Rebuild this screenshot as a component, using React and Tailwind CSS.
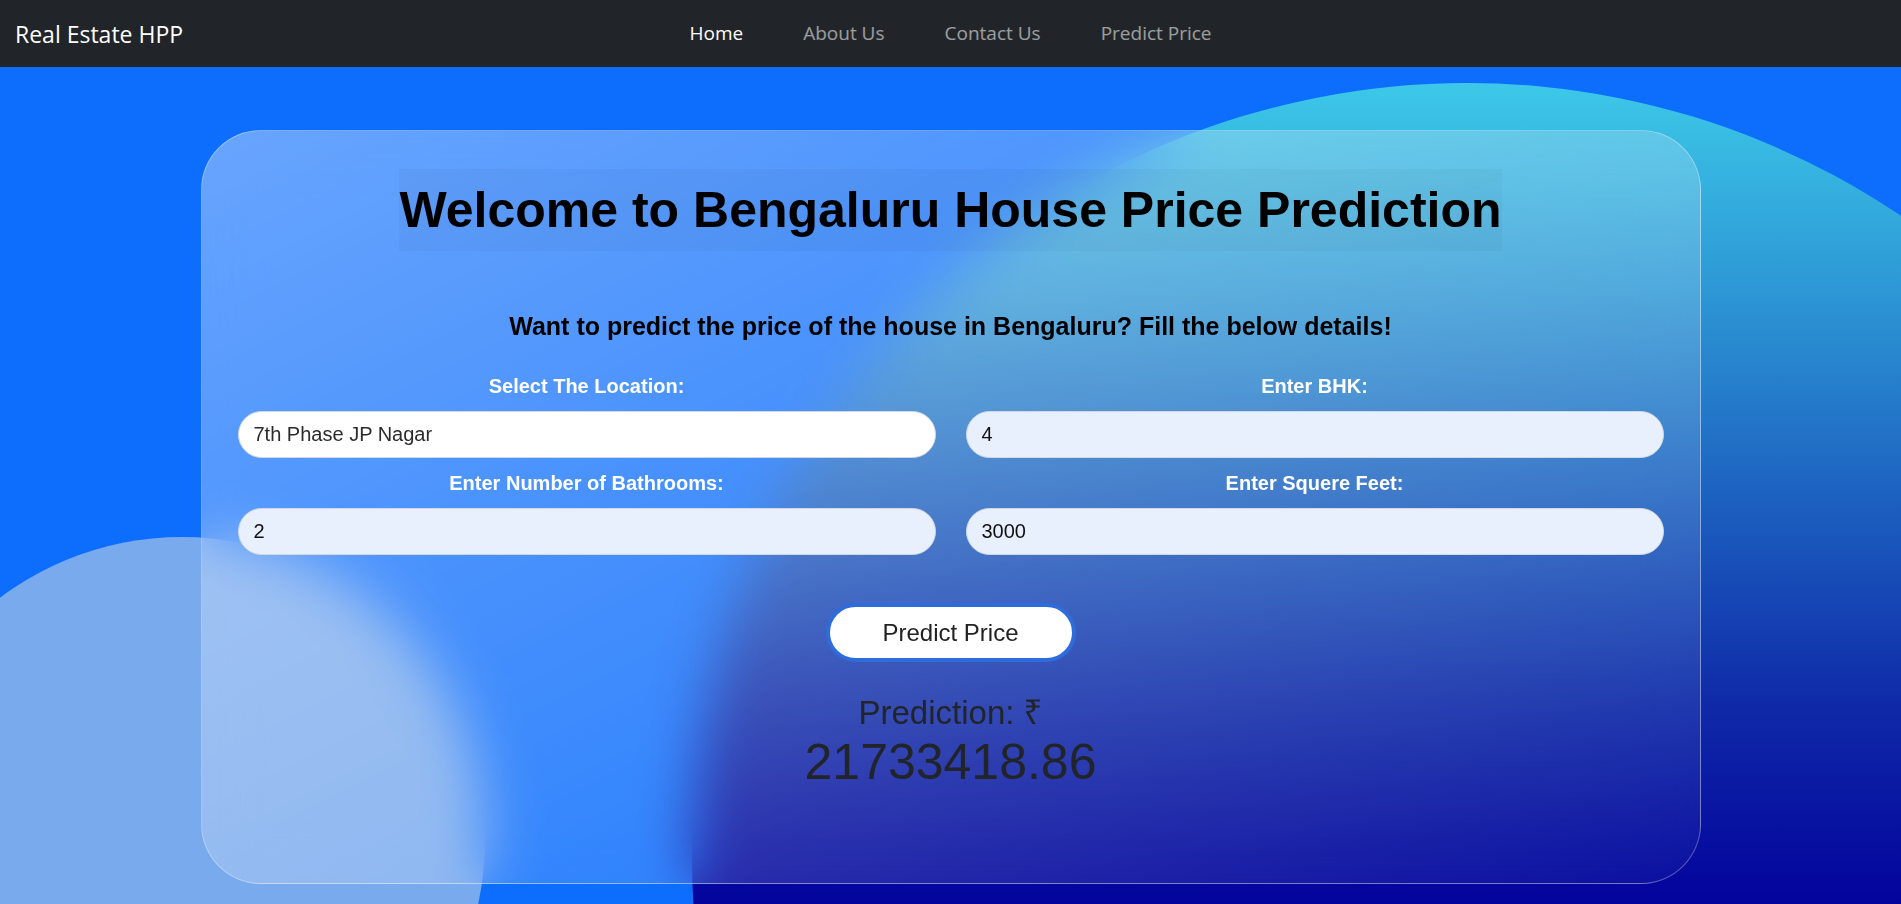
import React, { useState } from "react";

const navLinks = ["Home", "About Us", "Contact Us", "Predict Price"];

function Field({ label, value, white }) {
  return (
    <div className="flex flex-col items-center">
      <label className="mb-[13px] text-[20px] font-bold leading-[24px] text-white">
        {label}
      </label>
      <input
        type="text"
        defaultValue={value}
        className={`h-[47px] w-full rounded-full border border-[#d3d8e0] px-[15px] text-[20px] outline-none ${
          white ? "bg-white text-[#2b2b2b]" : "bg-[#e8f0fe] text-[#111]"
        }`}
      />
    </div>
  );
}

export default function App() {
  let [prediction] = useState("21733418.86");

  return (
    <div className="min-h-screen bg-[#0d6efd] font-['Liberation_Sans','Noto_Sans',Arial,sans-serif]">
      <nav className="grid h-[67px] grid-cols-[1fr_auto_1fr] items-center bg-[#212529] px-[15px] font-['Open_Sans',sans-serif]">
        <a href="#" className="text-[23px] leading-[30px] text-white">
          Real Estate HPP
        </a>
        <ul className="flex items-center gap-[60px] text-[19px]">
          {navLinks.map((link, i) => (
            <li key={link}>
              <a
                href="#"
                className={i === 0 ? "text-white" : "text-white/55"}
              >
                {link}
              </a>
            </li>
          ))}
        </ul>
        <div />
      </nav>

      <main className="relative h-[837px] overflow-hidden pt-[63px]">
        {/* background shapes */}
        <div className="absolute left-[692px] top-[16px] h-[1550px] w-[1550px] rounded-full bg-[linear-gradient(180deg,#3cc8e8_0%,#2c95d4_14%,#1c60c0_27%,#0f2aa8_40%,#03039c_53%,#000090_100%)]" />
        <div className="absolute left-[-121px] top-[470px] h-[606px] w-[606px] rounded-full bg-[#79aaee]" />

        <div className="relative mx-auto w-[1500px] rounded-[60px] border border-white/30 bg-linear-to-br from-white/[0.38] to-white/[0.03] px-[36px] pt-[38px] pb-[92px] backdrop-blur-[28px]">
          <div className="flex justify-center">
            <h1 className="bg-black/[0.03] py-3 text-[50px] font-bold leading-[58px] text-black">
              Welcome to Bengaluru House Price Prediction
            </h1>
          </div>

          <p className="mt-[60px] text-center text-[25px] font-bold leading-[30px] text-black">
            Want to predict the price of the house in Bengaluru? Fill the below details!
          </p>

          <form
            className="mt-[33px] grid grid-cols-2 gap-x-[30px] gap-y-[13px]"
            onSubmit={(e) => e.preventDefault()}
          >
            <Field label="Select The Location:" value="7th Phase JP Nagar" white />
            <Field label="Enter BHK:" value="4" />
            <Field label="Enter Number of Bathrooms:" value="2" />
            <Field label="Enter Squere Feet:" value="3000" />
          </form>

          <div className="mt-[48px] flex justify-center">
            <button
              type="button"
              className="h-[59px] w-[250px] rounded-full border-4 border-[#2f6cdb] bg-white text-[24px] text-[#222]"
            >
              Predict Price
            </button>
          </div>

          <div className="mt-[32px] flex flex-col items-center text-[#212529]">
            <span className="text-[33px] leading-[38px]">Prediction: ₹</span>
            <span className="mt-[2px] text-[50px] leading-[57px]">{prediction}</span>
          </div>
        </div>
      </main>
    </div>
  );
}
